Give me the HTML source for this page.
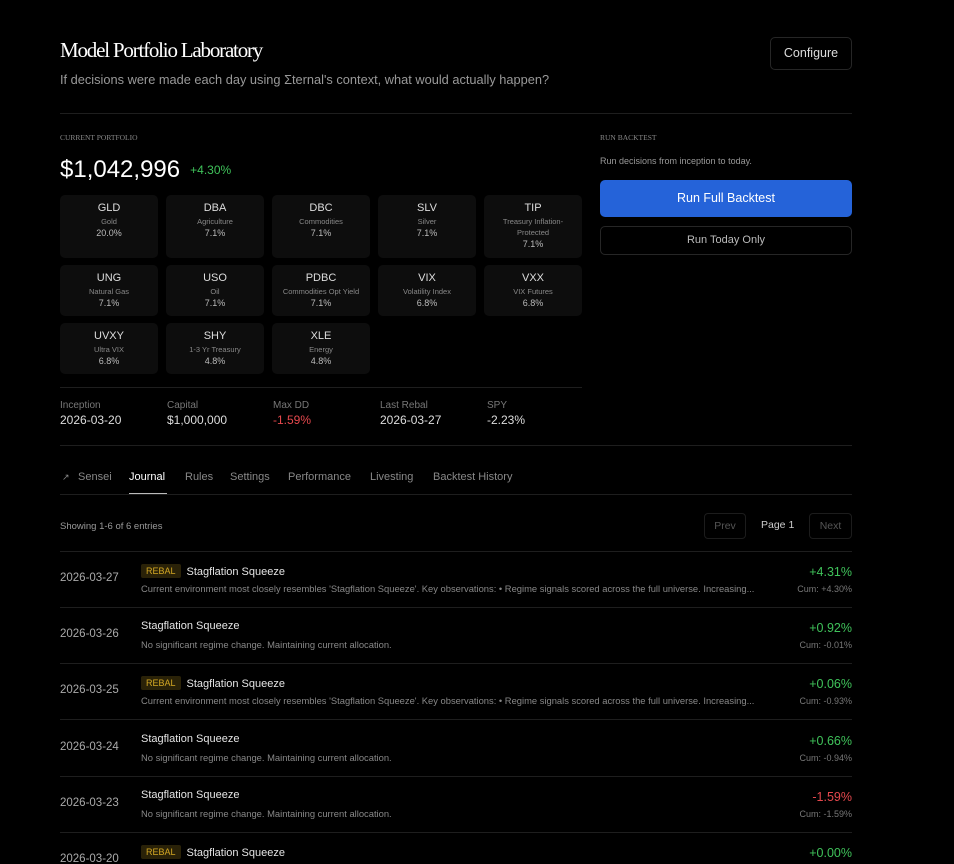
<!DOCTYPE html>
<html><head><meta charset="utf-8"><style>
*{box-sizing:border-box;margin:0;padding:0}
html,body{width:954px;height:864px;overflow:hidden}
body{background:#000;color:#e5e5e5;font-family:"Liberation Sans",sans-serif;position:relative}
.a{position:absolute}
.serif{font-family:"Liberation Serif",serif}
.card{position:absolute;width:98px;background:#0d0d0d;border-radius:5px;text-align:center}
.card b{display:block;font-size:11px;color:#ddd;font-weight:normal;margin-top:7px}
.card i{display:block;font-style:normal;font-size:7.5px;color:#888;margin-top:2px;line-height:11px}
.card s{display:block;text-decoration:none;font-size:9px;color:#bbb;margin-top:1px}
.line{position:absolute;height:1px;background:#1e1e1e}
.st .l{font-size:10px;color:#777}.st .v{font-size:12px;color:#ddd;margin-top:2px}
.tab{position:absolute;top:471px;font-size:11px;color:#888}
.row{position:absolute;left:60px;width:792px;height:56px}
.row .d{position:absolute;left:0;top:21px;font-size:11.5px;color:#aaa}
.row .t{position:absolute;left:81px;top:13px;font-size:11px;color:#e5e5e5}
.row .tag{display:inline-block;background:#2a2208;color:#d4a824;font-size:9px;padding:2px 5px;border-radius:2px;margin-right:6px;vertical-align:1px}
.row .s{position:absolute;left:81px;top:32px;font-size:9.4px;color:#888;white-space:nowrap}
.row .p{position:absolute;right:0;top:14px;font-size:12.5px;color:#3fc25a}
.row .c{position:absolute;right:0;top:33px;font-size:9px;color:#777}
</style></head><body>
<div class="a serif" style="left:60px;top:38px;font-size:21px;color:#fff;letter-spacing:-1.2px">Model Portfolio Laboratory</div>
<div class="a" style="left:60px;top:72px;font-size:12.8px;color:#999">If decisions were made each day using Σternal's context, what would actually happen?</div>
<div class="a" style="left:770px;top:37px;width:82px;height:33px;border:1px solid #262626;border-radius:5px;font-size:12.5px;color:#ddd;text-align:center;line-height:31px">Configure</div>
<div class="line" style="left:60px;top:113px;width:792px"></div>
<div class="a serif" style="left:60px;top:133px;font-size:7.5px;color:#888">CURRENT PORTFOLIO</div>
<div class="a" style="left:60px;top:156px;font-size:24px;color:#fff">$1,042,996 <span style="font-size:12px;color:#3fc25a;vertical-align:3px">&nbsp;+4.30%</span></div>

<div class="card" style="left:60px;top:195px;height:63px"><b>GLD</b><i>Gold</i><s>20.0%</s></div>
<div class="card" style="left:166px;top:195px;height:63px"><b>DBA</b><i>Agriculture</i><s>7.1%</s></div>
<div class="card" style="left:272px;top:195px;height:63px"><b>DBC</b><i>Commodities</i><s>7.1%</s></div>
<div class="card" style="left:378px;top:195px;height:63px"><b>SLV</b><i>Silver</i><s>7.1%</s></div>
<div class="card" style="left:484px;top:195px;height:63px"><b>TIP</b><i>Treasury Inflation-<br>Protected</i><s>7.1%</s></div>
<div class="card" style="left:60px;top:265px;height:51px"><b>UNG</b><i>Natural Gas</i><s>7.1%</s></div>
<div class="card" style="left:166px;top:265px;height:51px"><b>USO</b><i>Oil</i><s>7.1%</s></div>
<div class="card" style="left:272px;top:265px;height:51px"><b>PDBC</b><i>Commodities Opt Yield</i><s>7.1%</s></div>
<div class="card" style="left:378px;top:265px;height:51px"><b>VIX</b><i>Volatility Index</i><s>6.8%</s></div>
<div class="card" style="left:484px;top:265px;height:51px"><b>VXX</b><i>VIX Futures</i><s>6.8%</s></div>
<div class="card" style="left:60px;top:323px;height:51px"><b>UVXY</b><i>Ultra VIX</i><s>6.8%</s></div>
<div class="card" style="left:166px;top:323px;height:51px"><b>SHY</b><i>1-3 Yr Treasury</i><s>4.8%</s></div>
<div class="card" style="left:272px;top:323px;height:51px"><b>XLE</b><i>Energy</i><s>4.8%</s></div>

<div class="line" style="left:60px;top:387px;width:522px"></div>
<div class="a st" style="left:60px;top:400px"><div class="l">Inception</div><div class="v">2026-03-20</div></div>
<div class="a st" style="left:167px;top:400px"><div class="l">Capital</div><div class="v">$1,000,000</div></div>
<div class="a st" style="left:273px;top:400px"><div class="l">Max DD</div><div class="v" style="color:#e5484d">-1.59%</div></div>
<div class="a st" style="left:380px;top:400px"><div class="l">Last Rebal</div><div class="v">2026-03-27</div></div>
<div class="a st" style="left:487px;top:400px"><div class="l">SPY</div><div class="v">-2.23%</div></div>

<div class="a serif" style="left:600px;top:133px;font-size:7.5px;color:#888">RUN BACKTEST</div>
<div class="a" style="left:600px;top:156px;font-size:9px;color:#999">Run decisions from inception to today.</div>
<div class="a" style="left:600px;top:180px;width:252px;height:37px;background:#2563d9;border-radius:5px;text-align:center;line-height:37px;font-size:12.5px;color:#fff">Run Full Backtest</div>
<div class="a" style="left:600px;top:226px;width:252px;height:29px;border:1px solid #262626;border-radius:5px;text-align:center;line-height:27px;font-size:11px;color:#bbb">Run Today Only</div>
<div class="line" style="left:60px;top:445px;width:792px"></div>

<div class="tab" style="left:62px;font-size:9px;top:472px">↗</div>
<div class="tab" style="left:78px">Sensei</div>
<div class="tab" style="left:129px;color:#fff">Journal</div>
<div class="a" style="left:129px;top:493px;width:38px;height:1px;background:#bbb"></div>
<div class="tab" style="left:185px">Rules</div>
<div class="tab" style="left:230px">Settings</div>
<div class="tab" style="left:288px">Performance</div>
<div class="tab" style="left:370px">Livesting</div>
<div class="tab" style="left:433px">Backtest History</div>
<div class="line" style="left:60px;top:494px;width:792px"></div>

<div class="a" style="left:60px;top:521px;font-size:9.5px;color:#999">Showing 1-6 of 6 entries</div>
<div class="a" style="left:704px;top:513px;width:42px;height:26px;border:1px solid #1c1c1c;border-radius:4px;text-align:center;line-height:24px;font-size:10.5px;color:#555">Prev</div>
<div class="a" style="left:761px;top:519px;font-size:10.5px;color:#ccc">Page 1</div>
<div class="a" style="left:809px;top:513px;width:43px;height:26px;border:1px solid #1c1c1c;border-radius:4px;text-align:center;line-height:24px;font-size:10.5px;color:#555">Next</div>

<div class="line" style="left:60px;top:551px;width:792px"></div>
<div class="row" style="top:551px"><div class="d">2026-03-27</div><div class="t"><span class="tag">REBAL</span>Stagflation Squeeze</div><div class="s">Current environment most closely resembles 'Stagflation Squeeze'. Key observations: • Regime signals scored across the full universe. Increasing...</div><div class="p">+4.31%</div><div class="c">Cum: +4.30%</div></div>
<div class="line" style="left:60px;top:607px;width:792px"></div>
<div class="row" style="top:607px"><div class="d">2026-03-26</div><div class="t">Stagflation Squeeze</div><div class="s">No significant regime change. Maintaining current allocation.</div><div class="p">+0.92%</div><div class="c">Cum: -0.01%</div></div>
<div class="line" style="left:60px;top:663px;width:792px"></div>
<div class="row" style="top:663px"><div class="d">2026-03-25</div><div class="t"><span class="tag">REBAL</span>Stagflation Squeeze</div><div class="s">Current environment most closely resembles 'Stagflation Squeeze'. Key observations: • Regime signals scored across the full universe. Increasing...</div><div class="p">+0.06%</div><div class="c">Cum: -0.93%</div></div>
<div class="line" style="left:60px;top:719px;width:792px"></div>
<div class="row" style="top:720px"><div class="d">2026-03-24</div><div class="t">Stagflation Squeeze</div><div class="s">No significant regime change. Maintaining current allocation.</div><div class="p">+0.66%</div><div class="c">Cum: -0.94%</div></div>
<div class="line" style="left:60px;top:776px;width:792px"></div>
<div class="row" style="top:776px"><div class="d">2026-03-23</div><div class="t">Stagflation Squeeze</div><div class="s">No significant regime change. Maintaining current allocation.</div><div class="p" style="color:#e5484d">-1.59%</div><div class="c">Cum: -1.59%</div></div>
<div class="line" style="left:60px;top:832px;width:792px"></div>
<div class="row" style="top:832px"><div class="d">2026-03-20</div><div class="t"><span class="tag">REBAL</span>Stagflation Squeeze</div><div class="p">+0.00%</div></div>
</body></html>
